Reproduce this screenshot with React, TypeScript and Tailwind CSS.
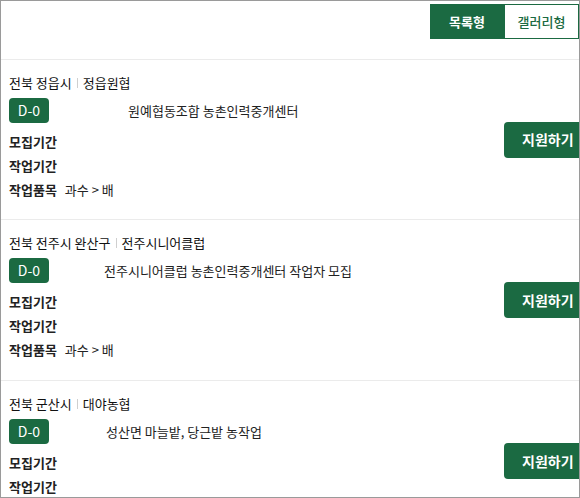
import React from 'react';

type Job = {
  region: string;
  org: string;
  title: string;
  titleGap: string;
  crop: string;
};

const jobs: Job[] = [
  { region: '전북 정읍시', org: '정읍원협', title: '원예협동조합 농촌인력중개센터', titleGap: 'ml-[79px]', crop: '과수 > 배' },
  { region: '전북 전주시 완산구', org: '전주시니어클럽', title: '전주시니어클럽 농촌인력중개센터 작업자 모집', titleGap: 'ml-[55px]', crop: '과수 > 배' },
  { region: '전북 군산시', org: '대야농협', title: '성산면 마늘밭, 당근밭 농작업', titleGap: 'ml-[57px]', crop: '과수 > 배' },
];

const JobRow = ({ job, first }: { job: Job; first: boolean }) => (
  <div className={`flex border-b border-[#ebebeb] ${first ? 'h-[160px]' : 'h-[161px]'}`}>
    <div className="flex-1 pl-[8px] pt-[11px]">
      {/* 지역 | 기관 */}
      <div className="flex h-[24px] items-center text-[13px] text-[#111]">
        <span>{job.region}</span>
        <span className="mx-[5px] h-[10px] w-px bg-[#cfcfcf]" />
        <span>{job.org}</span>
      </div>
      <div className="mt-[3px] flex items-center">
        <span className="flex h-[25px] w-[40px] items-center justify-center rounded-[4px] bg-[#1b6a42] text-[14px] text-white">
          D-0
        </span>
        <span className={`${job.titleGap} text-[13px]`}>{job.title}</span>
      </div>
      <div className="mt-[7px] text-[13px]">
        <div className="flex h-[24px] items-center font-bold">모집기간</div>
        <div className="flex h-[24px] items-center font-bold">작업기간</div>
        <div className="flex h-[24px] items-center">
          <span className="font-bold">작업품목</span>
          <span className="ml-[8px]">{job.crop}</span>
        </div>
      </div>
    </div>
    <button className="flex h-[36px] w-[75px] items-center self-center rounded-l-[4px] bg-[#1b6a42] pl-[18px] text-[14px] font-bold text-white">
      지원하기
    </button>
  </div>
);

export default function App() {
  return (
    <div className="h-[498px] w-[580px] overflow-hidden border border-[#9a9a9a] bg-white font-['Noto_Sans_CJK_KR',sans-serif] text-[#222]">
      {/* 보기 방식 */}
      <div className="flex h-[59px] justify-end border-b border-[#ebebeb] pt-[3px]">
        <div className="flex h-[35px]">
          <div className="flex w-[74px] items-center justify-center bg-[#1b6a42] text-[13px] font-bold text-white">
            목록형
          </div>
          <div className="flex w-[75px] items-center justify-center border border-[#1b6a42] bg-white text-[13px] font-medium text-[#1b6a42]">
            갤러리형
          </div>
        </div>
      </div>

      {jobs.map((job, i) => (
        <JobRow key={job.org} job={job} first={i === 0} />
      ))}
    </div>
  );
}
